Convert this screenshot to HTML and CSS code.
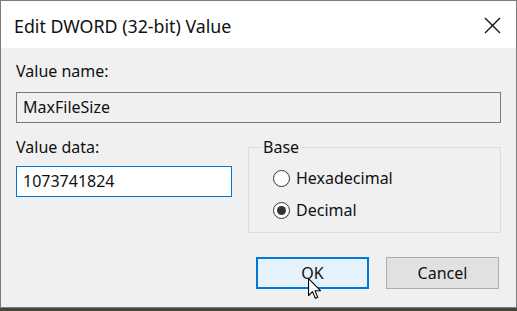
FILE: index.html
```html
<!DOCTYPE html>
<html lang="en">
<head>
  <meta charset="UTF-8" />
  <meta name="viewport" content="width=device-width, initial-scale=1" />
  <title>Edit DWORD (32-bit) Value</title>
  <link rel="stylesheet" href="styles.css">
</head>
<body>

  <div class="window">
    <div class="title-bar">
      <span class="title">Edit DWORD (32-bit) Value</span>
      <svg class="close" viewBox="0 0 17 17" width="17" height="17" aria-hidden="true">
        <path d="M1 1 L16 16 M16 1 L1 16" stroke="#111" stroke-width="1.4" fill="none" />
      </svg>
    </div>

    <div class="content">
      <div class="label">Value name:</div>
      <div class="textbox readonly">MaxFileSize</div>

      <div class="middle-row">
        <div class="data-col">
          <div class="label">Value data:</div>
          <div class="textbox focused">1073741824</div>
        </div>

        <fieldset class="group">
          <legend>Base</legend>
          <label class="radio"><span class="radio-dot"></span>Hexadecimal</label>
          <label class="radio"><span class="radio-dot checked"></span>Decimal</label>
        </fieldset>
      </div>

      <div class="buttons">
        <button class="btn btn-default">OK</button>
        <button class="btn">Cancel</button>
      </div>
    </div>

    <!-- mouse pointer hovering OK -->
    <svg class="pointer" viewBox="0 0 12 20" width="13" height="22" aria-hidden="true">
      <path d="M0.5 0.5 L0.5 16 L4.2 12.4 L6.8 18.6 L9 17.7 L6.5 11.6 L11.5 11.6 Z" fill="#fff" stroke="#000" stroke-width="1" stroke-linejoin="round" />
    </svg>
  </div>

</body>
</html>
```

FILE: styles.css
```css
body {
  margin: 0;
  background: #4a4438;
  font-family: 'Noto Sans', 'Open Sans', sans-serif;
  color: #111;
}

.window {
  position: relative;
  width: 517px;
  height: 308px;
  box-sizing: border-box;
  border: 1px solid #7c7c7c;
  background: #f0f0f0;
}

.title-bar {
  height: 47px;
  background: #fff;
  display: flex;
  align-items: center;
  justify-content: space-between;
  padding: 0 15px 0 13px;
}

.title {
  font-size: 17.8px;
  margin-top: 2px;
}

.close {
  margin-top: 2px;
}

.content {
  padding: 12px 14px 0 15px;
  font-size: 16px;
}

.label {
  line-height: 22px;
}

.textbox {
  box-sizing: border-box;
  height: 31px;
  margin-top: 10px;
  padding: 0 6px;
  line-height: 29px;
  border: 1px solid #7a7a7a;
  width: 485px;
}

.textbox.readonly {
  background: #f0f0f0;
}

.textbox.focused {
  margin-top: 8px;
  width: 216px;
  background: #fff;
  border-color: #0078d7;
}

.middle-row {
  display: grid;
  grid-template-columns: 216px 253px;
  column-gap: 16px;
  align-items: start;
  margin-top: 13px;
}

.group {
  margin: 2px 0 0;
  padding: 0 0 0 24px;
  border: 1px solid #dcdcdc;
  height: 95px;
  box-sizing: border-box;
}

.group legend {
  padding: 0 1px;
  margin-left: -11px;
  line-height: 18px;
}

.radio {
  display: flex;
  align-items: center;
  gap: 6px;
  height: 32px;
}

.radio:first-of-type {
  margin-top: 6px;
}

.radio-dot {
  width: 17px;
  height: 17px;
  box-sizing: border-box;
  border: 1px solid #333;
  border-radius: 50%;
  background: #fff;
  display: flex;
  align-items: center;
  justify-content: center;
}

.radio-dot.checked::after {
  content: '';
  width: 9px;
  height: 9px;
  border-radius: 50%;
  background: #333;
}

.buttons {
  display: flex;
  justify-content: flex-end;
  gap: 17px;
  margin-top: 24px;
  padding-right: 3px;
}

.btn {
  width: 113px;
  height: 32px;
  box-sizing: border-box;
  border: 1px solid #adadad;
  background: #e1e1e1;
  font-family: inherit;
  font-size: 16px;
  color: #111;
  padding: 0;
}

.btn-default {
  border: 2px solid #0078d7;
  background: #e5f1fb;
}

.pointer {
  position: absolute;
  left: 307px;
  top: 277px;
}
```
